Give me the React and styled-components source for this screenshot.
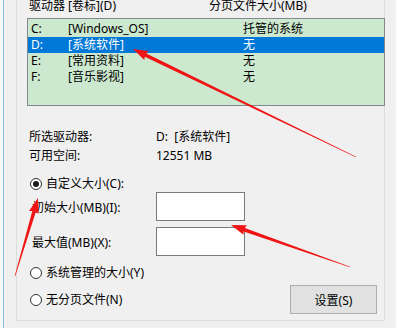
import React from "react";
import styled, { createGlobalStyle } from "styled-components";

const GlobalStyle = createGlobalStyle`
  html, body { margin: 0; padding: 0; background: #f0f0f0; }
  body {
    font-family: "Noto Sans", "Noto Sans CJK SC", "Liberation Sans", sans-serif;
    font-size: 12px;
    color: #000;
  }
`;

const Screen = styled.div`
  position: relative;
  width: 396px;
  height: 328px;
  overflow: hidden;
  display: flex;
  align-items: flex-start;
  background: #f0f0f0;
`;

const WindowEdge = styled.div`
  width: 3px;
  height: 100%;
  background: #f7f7f7;
  border-right: 1px solid #86bde3;
  flex: none;
`;

const Group = styled.div`
  box-sizing: border-box;
  margin-left: 12px;
  width: 369px;
  height: 321px;
  border: 1px solid #dcdcdc;
  border-top: none;
  display: flex;
  flex-direction: column;
  flex: none;
`;

const Header = styled.div`
  display: grid;
  grid-template-columns: 180px 1fr;
  height: 16px;
  line-height: 16px;
  margin-top: -2px;
  padding-left: 12px;
  white-space: nowrap;
`;

const List = styled.div`
  box-sizing: border-box;
  margin: 4px 0 0 10px;
  width: 358px;
  height: 88px;
  border: 1px solid #828790;
  background: #cce8cf;
  padding-top: 2px;
  position: relative;
  z-index: 1;
`;

const Row = styled.div`
  display: grid;
  grid-template-columns: 37px 175px 1fr;
  height: 16px;
  line-height: 16px;
  padding-left: 3px;
  white-space: nowrap;
  background: ${(p) => (p.$selected ? "#0078d7" : "transparent")};
  color: ${(p) => (p.$selected ? "#fff" : "#000")};
`;

const InfoRow = styled.div`
  display: grid;
  grid-template-columns: 127px 1fr;
  height: 16px;
  line-height: 16px;
  padding-left: 12px;
  margin-top: ${(p) => p.$mt || 0}px;
  white-space: nowrap;
`;

const RadioRow = styled.label`
  display: flex;
  align-items: center;
  gap: 4px;
  height: 16px;
  line-height: 16px;
  padding-left: 13px;
  margin-top: ${(p) => p.$mt || 0}px;
  white-space: nowrap;
`;

const RadioDot = styled.span`
  box-sizing: border-box;
  width: 12px;
  height: 12px;
  border-radius: 50%;
  border: 1px solid #333;
  background: #fff;
  display: flex;
  align-items: center;
  justify-content: center;
  flex: none;
  &::after {
    content: "";
    width: 6px;
    height: 6px;
    border-radius: 50%;
    background: ${(p) => (p.$checked ? "#1a1a1a" : "transparent")};
  }
`;

const FieldRow = styled.div`
  display: grid;
  grid-template-columns: 124px 89px;
  align-items: center;
  padding-left: 15px;
  margin-top: ${(p) => p.$mt || 0}px;
  white-space: nowrap;
`;

const TextBox = styled.div`
  box-sizing: border-box;
  width: 89px;
  height: 29px;
  background: #fff;
  border: 1px solid #7a7a7a;
`;

const BottomRow = styled.div`
  display: flex;
  align-items: center;
  justify-content: space-between;
  margin-top: 4px;
  padding-right: 7px;
`;

const Button = styled.div`
  box-sizing: border-box;
  width: 87px;
  height: 29px;
  background: #e1e1e1;
  border: 1px solid #adadad;
  display: flex;
  align-items: center;
  justify-content: center;
`;

const Overlay = styled.svg`
  position: absolute;
  left: 0;
  top: 0;
  width: 396px;
  height: 328px;
  pointer-events: none;
  z-index: 5;
`;

function arrowPoints(hx, hy, tx, ty) {
  const dx = hx - tx;
  const dy = hy - ty;
  const len = Math.hypot(dx, dy);
  const ux = dx / len;
  const uy = dy / len;
  const nx = -uy;
  const ny = ux;
  const L = 14;
  const w = 5;
  const bx = hx - ux * L;
  const by = hy - uy * L;
  const pts = [
    [tx + nx * 0.3, ty + ny * 0.3],
    [bx + nx * 1.8, by + ny * 1.8],
    [bx + nx * w - ux * 1, by + ny * w - uy * 1],
    [hx, hy],
    [bx - nx * w - ux * 1, by - ny * w - uy * 1],
    [bx - nx * 1.8, by - ny * 1.8],
    [tx - nx * 0.3, ty - ny * 0.3],
  ];
  return pts.map((p) => p.map((v) => v.toFixed(1)).join(",")).join(" ");
}

const drives = [
  { d: "C:", label: "[Windows_OS]", size: "托管的系统" },
  { d: "D:", label: "[系统软件]", size: "无", selected: true },
  { d: "E:", label: "[常用资料]", size: "无" },
  { d: "F:", label: "[音乐影视]", size: "无" },
];

export default function App() {
  return (
    <>
      <GlobalStyle />
      <Screen>
        <WindowEdge />
        <Group>
          <Header>
            <span>驱动器 [卷标](D)</span>
            <span>分页文件大小(MB)</span>
          </Header>
          <List>
            {drives.map((r) => (
              <Row key={r.d} $selected={r.selected}>
                <span>{r.d}</span>
                <span>{r.label}</span>
                <span>{r.size}</span>
              </Row>
            ))}
          </List>
          <InfoRow $mt={23}>
            <span>所选驱动器:</span>
            <span>D:&nbsp;&nbsp;[系统软件]</span>
          </InfoRow>
          <InfoRow $mt={3}>
            <span>可用空间:</span>
            <span>12551 MB</span>
          </InfoRow>
          <RadioRow $mt={12}>
            <RadioDot $checked />
            <span>自定义大小(C):</span>
          </RadioRow>
          <FieldRow>
            <span>初始大小(MB)(I):</span>
            <TextBox />
          </FieldRow>
          <FieldRow $mt={6}>
            <span>最大值(MB)(X):</span>
            <TextBox />
          </FieldRow>
          <RadioRow $mt={9}>
            <RadioDot />
            <span>系统管理的大小(Y)</span>
          </RadioRow>
          <BottomRow>
            <RadioRow>
              <RadioDot />
              <span>无分页文件(N)</span>
            </RadioRow>
            <Button>设置(S)</Button>
          </BottomRow>
        </Group>
        <Overlay viewBox="0 0 396 328">
          <polygon points={arrowPoints(133, 49, 356, 157)} fill="#f01414" />
          <polygon points={arrowPoints(231, 225, 350, 267)} fill="#f01414" />
          <polygon points={arrowPoints(38, 198, 15, 276)} fill="#f01414" />
        </Overlay>
      </Screen>
    </>
  );
}
